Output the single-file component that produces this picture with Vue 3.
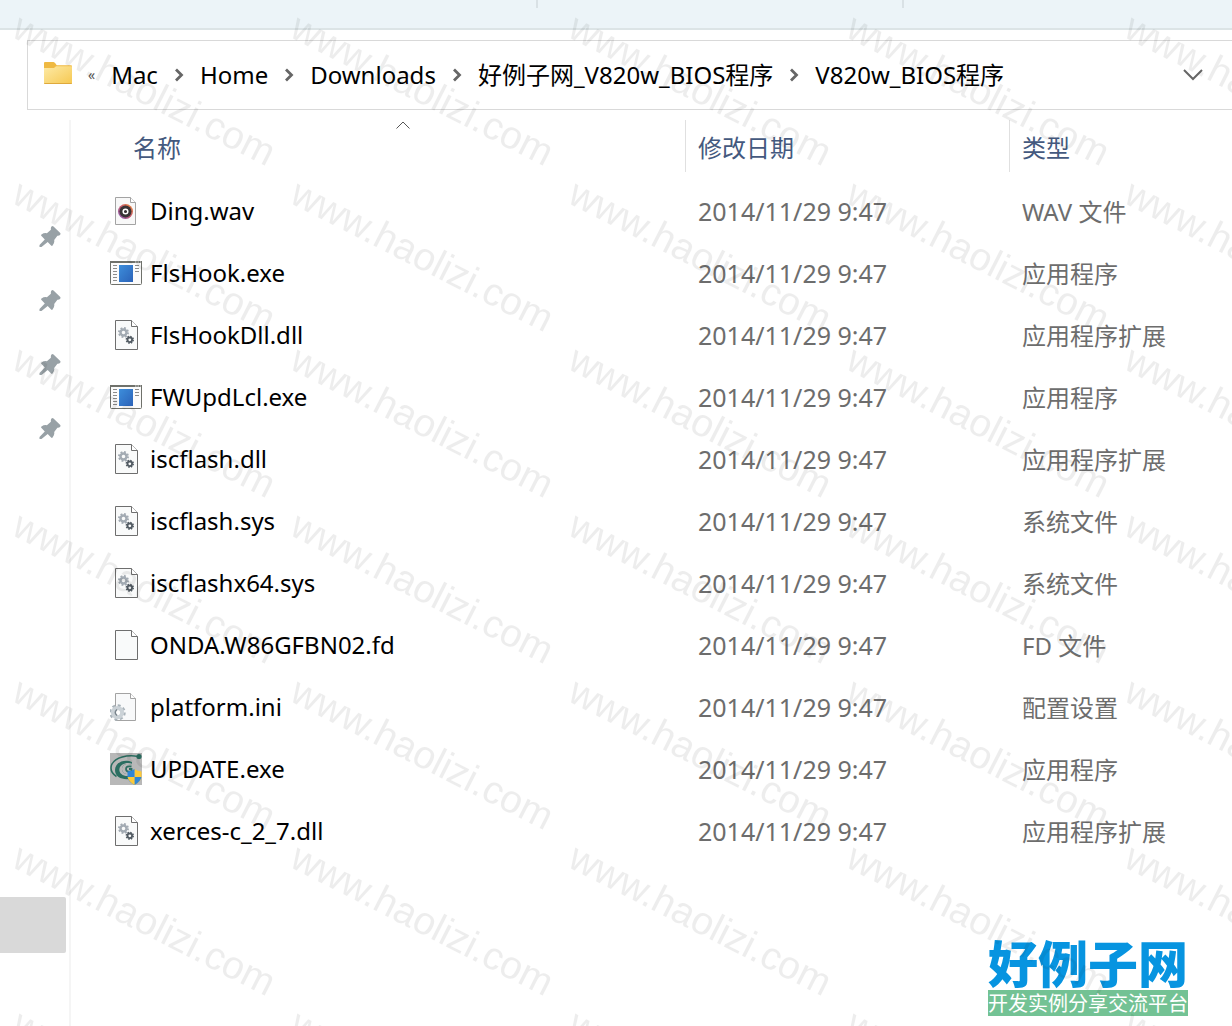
<template>
  <div class="explorer">
    <div class="ribbon">
      <span class="tick first"></span>
      <span class="tick second"></span>
    </div>

    <nav class="address">
      <svg class="folder" width="28" height="26" viewBox="0 0 28 26">
        <defs>
          <linearGradient id="folderFill" x1="0" y1="0" x2="1" y2="1">
            <stop offset="0" stop-color="#fdeaa6" />
            <stop offset="1" stop-color="#f6c851" />
          </linearGradient>
        </defs>
        <path d="M1 0h8.500q1 0 2 1.500l1.200 1.800H27q1 0 1 1V10H0V1q0-1 1-1z" fill="#efb942" />
        <path d="M0 6h10l2-1.800h16V21q0 1-1 1H1q-1 0-1-1z" fill="url(#folderFill)" />
        <path d="M0 21h28q0 1-1 1H1q-1 0-1-1z" fill="#dfa93c" />
      </svg>
      <button class="overflow" aria-label="上级">«</button>
      <template v-for="(crumb, index) in crumbs" :key="crumb">
        <svg v-if="index > 0" class="arrow" width="10" height="14" viewBox="0 0 10 14">
          <path d="M2 1.500L7.500 7L2 12.500" fill="none" stroke="#666" stroke-width="2.800" />
        </svg>
        <button class="crumb">{{ crumb }}</button>
      </template>
      <button class="history" aria-label="历史">
        <svg width="20" height="12" viewBox="0 0 20 12">
          <path d="M1 1l9 9l9-9" fill="none" stroke="#666" stroke-width="2" />
        </svg>
      </button>
    </nav>

    <div class="body">
      <aside class="sidebar">
        <ul class="pins">
          <li v-for="n in 4" :key="n">
            <svg width="22" height="22" viewBox="0 0 22 22">
              <path
                d="M12.500.5q1-.8 2 0l6.500 6.300q1 1 0 2.200q-1 1-2.600.8l-3.200 4.200q.6 3-1.600 5.600q-.7.700-1.500 0l-3.400-3.500L2.500 21H.5v-2l5.300-5.600l-3.300-3.400q-.8-.8 0-1.500q2.500-1.800 5.400-1.300l4-3.500q-.3-2 .6-3.200z"
                fill="#98a1a6"
              />
            </svg>
          </li>
        </ul>
        <div class="selected"></div>
      </aside>

      <table class="files">
        <thead>
          <tr>
            <th class="col-name">
              <button>名称</button>
              <svg class="sort" width="14" height="8" viewBox="0 0 14 8">
                <path d="M.5 7.500L7 1l6.500 6.500" fill="none" stroke="#555" />
              </svg>
            </th>
            <th class="col-date"><button>修改日期</button></th>
            <th class="col-type"><button>类型</button></th>
          </tr>
        </thead>
        <tbody>
          <tr v-for="file in files" :key="file.name">
            <td>
              <div class="name">
                <svg width="32" height="32" viewBox="0 0 32 32">
                  <template v-if="file.icon === 'exe'">
                    <defs>
                      <linearGradient id="exeFill" x1="0" y1="0" x2="1" y2="1">
                        <stop offset="0" stop-color="#3d8edb" />
                        <stop offset="1" stop-color="#2b62b8" />
                      </linearGradient>
                    </defs>
                    <rect x=".5" y="4.500" width="31" height="23" rx="1" fill="#fbfbfb" stroke="#6f716b" />
                    <path d="M0 5h32" stroke="#6f716b" stroke-width="2" />
                    <path d="M25 5h1.500M27.500 5H29M30 5h1" stroke="#ddd" />
                    <rect x="9" y="8" width="14" height="17" fill="url(#exeFill)" />
                    <path d="M3 8.500h4M3 11.500h4M3 14.500h4M3 17.500h4M3 20.500h4M3 23.500h4M25 8.500h4M25 11.500h4M25 14.500h4" stroke="#8c8c8c" />
                  </template>
                  <template v-else-if="file.icon === 'update'">
                    <rect width="32" height="32" fill="#b8b8b8" />
                    <path d="M28 3.500C18 1.500 5 4 1.500 12c-1.500 5 1 9 5 11.500" fill="none" stroke="#2b6e61" stroke-width="1.500" />
                    <circle cx="29" cy="3.500" r="2.600" fill="#2b6e61" />
                    <path d="M22 9C15 5.500 5 9 5 17c0 8 9 10.500 17 8.500V12c-5-2.500-10-.5-10 4c0 3.500 3 5.500 7 5v2C8 24 6 13 15 10.500c2.500-.7 5-.5 7 .2z" fill="#2b6e61" />
                    <path d="M22 12c-5-2.500-10-.5-10 4c0 3.500 3 5.500 7 5h3z" fill="#b8b8b8" />
                    <path d="M21.500 13.500q-5.500-1-5.500 2.500q0 3.500 5.500 2.500v-2.500h-2.500" fill="none" stroke="#2b6e61" stroke-width="1.800" />
                    <path d="M24.500 16q3 2.300 7 2.500v5q0 5-7 8.500z" fill="#fcc93a" />
                    <path d="M24.500 16q-3 2.300-7 2.500v5q0 5 7 8.500z" fill="#2f86d6" />
                    <path d="M24.500 24h6.900q-.7 4.500-6.900 8z" fill="#2f86d6" />
                    <path d="M24.500 24h-6.900q.7 4.500 6.900 8z" fill="#fcc93a" />
                  </template>
                  <template v-else-if="file.icon === 'ini'">
                    <path d="M5.500 2.500h15l5 5v22h-20z" fill="#f8f9fa" stroke="#a3a3a3" />
                    <path d="M20.500 2.500v5h5" fill="#fff" stroke="#a3a3a3" />
                    <circle cx="7.500" cy="21.500" r="7" fill="none" stroke="#a9b3ba" stroke-width="2.500" stroke-dasharray="2.900 2.598" />
                    <circle cx="7.500" cy="21.500" r="4.600" fill="#fff" stroke="#cbd2d7" stroke-width="4" />
                    <path d="M7 18.500q-3.500 3 0 6" fill="none" stroke="#78838b" stroke-width="1.500" />
                  </template>
                  <template v-else-if="file.icon === 'wav'">
                    <defs>
                      <linearGradient id="discFill" x1="0" y1="1" x2="1" y2="0">
                        <stop offset="0" stop-color="#7b55b5" />
                        <stop offset=".5" stop-color="#c35a72" />
                        <stop offset="1" stop-color="#f28a32" />
                      </linearGradient>
                    </defs>
                    <path d="M5.500 2.500h15l5 5v22h-20z" fill="#f8f8f8" stroke="#a3a3a3" />
                    <path d="M20.500 2.500v5h5" fill="#fff" stroke="#a3a3a3" />
                    <circle cx="15.500" cy="16.500" r="7.500" fill="url(#discFill)" />
                    <circle cx="15.500" cy="16.500" r="6" fill="#383436" />
                    <circle cx="15.500" cy="16.500" r="2.300" fill="#383436" stroke="#fff" stroke-width="1.500" />
                  </template>
                  <template v-else>
                    <path d="M5.500 1.500h16l6 6v23h-22z" fill="#f9fafa" stroke="#6e6e6e" />
                    <path d="M21.500 1.500v6h6" fill="#fff" stroke="#6e6e6e" />
                    <template v-if="file.icon === 'gears'">
                      <circle cx="13.500" cy="13.500" r="4.500" fill="none" stroke="#a3abb3" stroke-width="2" stroke-dasharray="1.800 1.734" />
                      <circle cx="13.500" cy="13.500" r="3" fill="none" stroke="#a3abb3" stroke-width="2.400" />
                      <circle cx="19.800" cy="20.800" r="3.400" fill="none" stroke="#525b63" stroke-width="1.600" stroke-dasharray="1.400 1.270" />
                      <circle cx="19.800" cy="20.800" r="2.300" fill="none" stroke="#525b63" stroke-width="1.800" />
                    </template>
                  </template>
                </svg>
                <span>{{ file.name }}</span>
              </div>
            </td>
            <td class="date">2014/11/29 9:47</td>
            <td class="type">{{ file.type }}</td>
          </tr>
        </tbody>
      </table>
    </div>

    <div class="brand">
      <strong>好例子网</strong>
      <span>开发实例分享交流平台</span>
    </div>

    <svg class="watermark" width="100%" height="100%" aria-hidden="true">
      <defs>
        <pattern id="mark" width="278" height="166" patternUnits="userSpaceOnUse">
          <text x="10" y="36" transform="rotate(27 10 36)">www.haolizi.com</text>
        </pattern>
      </defs>
      <rect width="100%" height="100%" fill="url(#mark)" />
    </svg>
  </div>
</template>

<script setup>
const crumbs = ['Mac', 'Home', 'Downloads', '好例子网_V820w_BIOS程序', 'V820w_BIOS程序'];

const files = [
  { name: 'Ding.wav', type: 'WAV 文件', icon: 'wav' },
  { name: 'FlsHook.exe', type: '应用程序', icon: 'exe' },
  { name: 'FlsHookDll.dll', type: '应用程序扩展', icon: 'gears' },
  { name: 'FWUpdLcl.exe', type: '应用程序', icon: 'exe' },
  { name: 'iscflash.dll', type: '应用程序扩展', icon: 'gears' },
  { name: 'iscflash.sys', type: '系统文件', icon: 'gears' },
  { name: 'iscflashx64.sys', type: '系统文件', icon: 'gears' },
  { name: 'ONDA.W86GFBN02.fd', type: 'FD 文件', icon: 'blank' },
  { name: 'platform.ini', type: '配置设置', icon: 'ini' },
  { name: 'UPDATE.exe', type: '应用程序', icon: 'update' },
  { name: 'xerces-c_2_7.dll', type: '应用程序扩展', icon: 'gears' }
];
</script>

<style>
body {
  margin: 0;
  background: #fff;
}
</style>

<style scoped>
.explorer {
  position: relative;
  display: flex;
  flex-direction: column;
  min-height: 100vh;
  overflow: hidden;
  font-family: "Noto Sans", "Noto Sans CJK SC", sans-serif;
  font-size: 24px;
  line-height: 32px;
  color: #000;
}

button {
  padding: 0;
  border: none;
  background: none;
  font: inherit;
  color: inherit;
  white-space: nowrap;
}

svg {
  display: block;
  flex-shrink: 0;
}

.ribbon {
  display: flex;
  height: 28px;
  background: #ecf4f8;
  border-bottom: 2px solid #dce4e6;
}

.tick {
  width: 2px;
  height: 8px;
  background: #d9e1e5;
}

.tick.first {
  margin-left: 536px;
}

.tick.second {
  margin-left: 364px;
}

.address {
  display: flex;
  align-items: center;
  gap: 16px;
  height: 68px;
  margin: 10px 0 10px 27px;
  padding: 0 29px 0 16px;
  border: 1px solid #d9d9d9;
  border-right: none;
}

.overflow {
  font-size: 14px;
  color: #555;
}

.history {
  margin-left: auto;
}

.body {
  display: flex;
  flex: 1;
}

.sidebar {
  width: 69px;
  flex-shrink: 0;
  border-right: 2px solid #f5f5f5;
}

.pins {
  margin: 0;
  padding: 85px 0 0;
  list-style: none;
}

.pins li {
  display: flex;
  align-items: center;
  height: 64px;
  padding-left: 39px;
}

.selected {
  width: 66px;
  height: 56px;
  margin-top: 436px;
  border-radius: 0 2px 2px 0;
  background: #d9d9d9;
}

.files {
  flex: 1;
  align-self: flex-start;
  table-layout: fixed;
  border-collapse: separate;
  border-spacing: 0;
}

th {
  position: relative;
  height: 52px;
  padding: 3px 0 0 12px;
  border-left: 1px solid #e0e0e0;
  box-sizing: border-box;
  text-align: left;
  font-weight: 400;
  color: #44597e;
}

th.col-name {
  padding-left: 62px;
  border-left: none;
}

.col-date {
  width: 324px;
}

.col-type {
  width: 223px;
}

.sort {
  position: absolute;
  top: 1px;
  left: calc(50% + 18px);
}

tbody::before {
  content: "";
  display: block;
  height: 8px;
}

td {
  height: 62px;
  padding: 0 0 0 13px;
  box-sizing: border-box;
  white-space: nowrap;
}

td:first-child {
  padding-left: 39px;
}

.name {
  display: flex;
  align-items: center;
  gap: 8px;
}

.date,
.type {
  color: #6d6d6d;
}

.date {
  font-size: 25px;
}

.type {
  padding-top: 2px;
}

.brand {
  position: absolute;
  right: 44px;
  bottom: 10px;
  display: flex;
  flex-direction: column;
  gap: 4px;
  font-family: "Noto Sans CJK SC", sans-serif;
}

.brand strong {
  font-size: 50px;
  line-height: 50px;
  font-weight: 900;
  color: #0794e0;
}

.brand span {
  background: #73c294;
  font-size: 20px;
  line-height: 26px;
  text-align: center;
  color: #fff;
}

.watermark {
  position: absolute;
  inset: 0;
  pointer-events: none;
}

.watermark text {
  font-family: "Liberation Sans", Arial, sans-serif;
  font-size: 39px;
  fill: #000;
  fill-opacity: 0.07;
}
</style>
